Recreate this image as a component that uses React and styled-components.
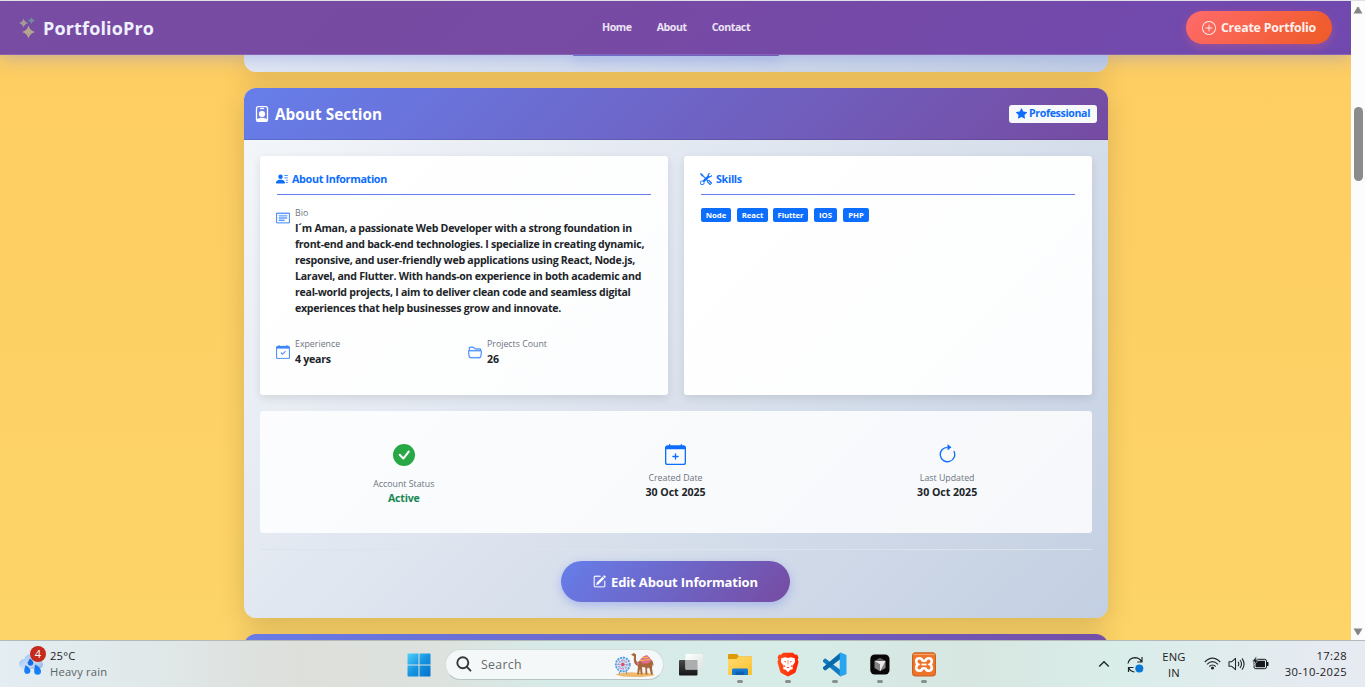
import React from "react";
import styled, { createGlobalStyle } from "styled-components";
import {
  BsPersonBadge, BsPersonLinesFill, BsCardText, BsCalendarCheck, BsFolder2Open, BsTools,
  BsCalendarPlus, BsArrowClockwise, BsPencilSquare, BsStarFill, BsCheckCircleFill, BsPlusCircle,
} from "react-icons/bs";

const Global = createGlobalStyle`
  * { box-sizing: border-box; }
  html, body { margin: 0; padding: 0; overflow: hidden; }
  body { font-family: "Open Sans", "Noto Sans", sans-serif; color: #212529; }
  svg { display: block; flex: none; }
`;

const Screen = styled.div`
  width: 1365px; height: 687px; display: flex; flex-direction: column; overflow: hidden;
  border-top: 1px solid #dfe0e8;
`;
const Browser = styled.div`display: flex; height: 639px; flex: none;`;
const Page = styled.div`
  width: 1351px; display: flex; flex-direction: column; overflow: hidden;
  background: linear-gradient(180deg, #fecd61, #fdd468);
`;

const Header = styled.header`
  position: relative; z-index: 2; height: 54px; flex: none; display: grid;
  grid-template-columns: 602px 1fr 165px; align-items: center;
  background: linear-gradient(135deg, #784ca2 0%, #774aa3 42%, #7049b0 100%);
  border-bottom: 1px solid #8863b3;
  box-shadow: 0 3px 17px rgba(102, 126, 234, 0.38);
`;
const Brand = styled.div`
  display: flex; align-items: center; gap: 6px; padding-left: 19px;
  color: #eef0ff; font-size: 18px; font-weight: 700; line-height: 26px; letter-spacing: 0.15px;
  white-space: nowrap;
`;
const Nav = styled.nav`
  display: flex; gap: 25px; font-size: 10.6px; font-weight: 700; line-height: 16px; color: #ece4f4;
  letter-spacing: -0.42px; padding-bottom: 2px;
`;
const CreateButton = styled.button`
  width: 146px; height: 33px; border: 0; border-radius: 17px; padding: 1px 0 0; display: flex;
  align-items: center; justify-content: center; gap: 5px; color: #fff0ee; font: 700 12.4px/18px "Open Sans", sans-serif;
  background: linear-gradient(135deg, #ff6b6b, #ee5a24); letter-spacing: -0.2px; white-space: nowrap;
  box-shadow: 0 3px 10px rgba(255, 107, 107, 0.3); margin-bottom: 1px;
`;

const Main = styled.main`
  width: 864px; margin-left: 244px; display: flex; flex-direction: column; gap: 16px; height: 585px;
`;
const cardShadow = "0 7px 27px rgba(0, 0, 0, 0.15)";
const PreviousCard = styled.section`
  height: 17px; flex: none; display: flex; justify-content: center; border-radius: 0 0 12px 12px;
  background: linear-gradient(135deg, #f5f7fa, #c3cfe2) bottom / 864px 530px no-repeat;
  box-shadow: ${cardShadow};
`;
const PreviousButton = styled.div`
  width: 206px; height: 1px; border-radius: 0 0 8px 8px; background: linear-gradient(90deg, #6a6ccf, #7652a9);
  box-shadow: 0 3px 11px 1px rgba(102, 126, 234, 0.45);
`;
const Card = styled.section`
  height: 530px; flex: none; border-radius: 12px; overflow: hidden; display: flex; flex-direction: column;
  background: linear-gradient(135deg, #f5f7fa, #c3cfe2); box-shadow: ${cardShadow};
`;
const NextCard = styled.section`
  height: 40px; flex: none; border-radius: 12px 12px 0 0; background: linear-gradient(90deg, #687be6, #734fa8);
  box-shadow: ${cardShadow};
`;
const CardHeader = styled.header`
  height: 52px; flex: none; padding: 0 11px 0 10px; display: flex; align-items: center; justify-content: space-between;
  background: linear-gradient(135deg, #667eea, #764ba2); border-bottom: 1px solid rgba(0, 0, 0, 0.12);
`;
const CardTitle = styled.h2`
  margin: 0; display: flex; align-items: center; gap: 5px; color: #fff; font-size: 15.3px; font-weight: 700; line-height: 20px;
  letter-spacing: 0.05px;
  svg { stroke: currentColor; stroke-width: 0.3; }
`;
const ProBadge = styled.span`
  width: 88px; height: 18px; display: flex; align-items: center; justify-content: center; gap: 2px;
  background: #f8f9fa; border-radius: 3px; color: #0d6efd; font-size: 10.6px; font-weight: 700; line-height: 16px;
  letter-spacing: -0.35px; padding-bottom: 1px;
`;
const CardBody = styled.div`flex: 1; padding: 16px; display: flex; flex-direction: column;`;
const Columns = styled.div`display: grid; grid-template-columns: 1fr 1fr; gap: 16px; height: 239px;`;
const Panel = styled.section`
  padding: 16px 17px 0; border-radius: 3px; background: linear-gradient(135deg, #ffffff, #fcfdfe);
  box-shadow: 0 3px 10px rgba(0, 0, 0, 0.1);
`;
const PanelTitle = styled.h3`
  margin: 0; height: 23px; display: flex; gap: 4px; align-items: flex-start; border-bottom: 1px solid #667eea;
  color: #0d6efd; font-size: 10.8px; font-weight: 700; line-height: 14px; letter-spacing: -0.35px;
  svg { margin: 1px 0 0 -1px; }
`;
const Fields = styled.div`display: grid; grid-template-columns: 192px 1fr; row-gap: 21px; margin-top: 11px;`;
const Field = styled.div`
  display: flex; gap: 5px; color: #3c87fb; grid-column: ${p => (p.$wide ? "1 / -1" : "auto")};
  > svg { margin: ${p => (p.$wide ? "5px" : "8px")} 0 0 -1px; stroke: currentColor; stroke-width: 0.25; }
`;
const Label = styled.div`font-size: 8.8px; line-height: 14px; color: #6c757d; white-space: nowrap;`;
const Value = styled.div`
  font-size: 10.6px; font-weight: 700; line-height: 16px; color: ${p => p.$color || "#212529"};
  letter-spacing: ${p => p.$ls || "-0.27px"}; white-space: pre;
`;
const Skills = styled.div`display: flex; gap: 6px; margin-top: 13px;`;
const Skill = styled.span`
  width: ${p => p.$w}px; height: 14px; border-radius: 2px; background: #0d6efd; color: #fff;
  font-size: 7.8px; font-weight: 700; line-height: 14px; text-align: center; letter-spacing: -0.1px;
  &:nth-child(3) { margin-left: -1px; }
`;
const Stats = styled.section`
  height: 122px; flex: none; margin-top: 16px; padding: 33px 9px 0 8px; border-radius: 3px; display: grid;
  grid-template-columns: repeat(3, 1fr);
  background: rgba(255, 255, 255, 0.84);
`;
const Stat = styled.div`
  display: flex; flex-direction: column; align-items: center; color: ${p => p.$color};
  > svg { margin-bottom: ${p => p.$gap}px; }
`;
const StatValue = styled(Value)`line-height: ${p => p.$lh || 15}px;`;
const Actions = styled.footer`
  margin-top: 16px; border-top: 1px solid #dde3eb; padding-top: 11px; display: flex; justify-content: center;
`;
const EditButton = styled.button`
  width: 229px; height: 41px; border: 0; border-radius: 21px; padding: 0; display: flex; align-items: center;
  justify-content: center; gap: 5px; color: #fff; font: 700 13px/20px "Open Sans", sans-serif; white-space: nowrap;
  background: linear-gradient(135deg, #667eea, #764ba2); box-shadow: 0 3px 10px rgba(102, 126, 234, 0.4);
  margin-right: 1px; letter-spacing: -0.14px;
  svg { stroke: currentColor; stroke-width: 0.3; }
`;

const Scrollbar = styled.div`
  width: 14px; background: #fcfcfc; display: flex; flex-direction: column; align-items: center; padding-top: 5px;
`;
const Thumb = styled.div`width: 9px; height: 74px; margin: 93px 0 447px; border-radius: 5px; background: #8b8b8b;`;

const Taskbar = styled.footer`
  height: 47px; flex: none; display: flex; border-top: 1px solid #b3b9b8; padding: 0 18px;
  background: linear-gradient(90deg, #e3edf2 0%, #e0e8e9 11%, #dddfda 22%, #dde2de 32%, #d6ebe8 41%, #d7ebe7 60%, #d7e6e1 71%, #d9ede9 82%, #e4ebf0 94%, #e6ebf1 100%);
`;
const Weather = styled.div`width: 389px; flex: none; display: flex; gap: 4px; padding-top: 4px;`;
const TaskText = styled.div`
  font-size: 11.2px; line-height: 16px; color: #1c2023; text-align: ${p => p.$align || "left"}; width: ${p => p.$w || "auto"};
  padding-top: ${p => p.$pt || "3px"}; white-space: nowrap; letter-spacing: ${p => p.$ls || "0.1px"};
  span { color: #5b6468; }
`;
const Apps = styled.div`width: 679px; flex: none; display: flex;`;
const AppSlot = styled.div`
  width: ${p => p.$w}px; margin-left: ${p => p.$ml}px; height: 46px; padding-top: ${p => p.$pt || 12}px;
  display: flex; flex-direction: column; justify-content: space-between; align-items: center;
  &::after { content: ""; width: 6px; height: 3px; margin-bottom: 4px; border-radius: 2px; background: ${p => (p.$open ? "#858f8e" : "transparent")}; }
`;
const Search = styled.div`
  width: 219px; height: 31px; margin: 8px 0 0 14px; padding: 0 7px 0 10px; border-radius: 16px; display: flex; align-items: center;
  background: #f4f8f8; border: 1px solid #d3dddb; border-bottom-color: #b8c4c2; color: #646a6c; font-size: 12.3px;
  span { flex: 1; padding: 0 0 1px 9px; letter-spacing: 0.3px; }
  > svg:first-child { margin-bottom: 1px; }
`;
const Tray = styled.div`display: flex; flex: 1;`;
const TrayIcon = styled.div`margin-left: ${p => p.$ml}px; padding-top: ${p => p.$pt}px;`;

const Sparkles = () => (
  <svg width="18" height="22" viewBox="0 0 18 22">
    <path d="M9.500 8.500 Q10.900 13.600 16 15 Q10.900 16.400 9.500 21.500 Q8.100 16.400 3 15 Q8.100 13.600 9.500 8.500Z" fill="#b5a58f" />
    <path d="M4.500 1.500 Q5.500 5 9 6 Q5.500 7 4.500 10.500 Q3.500 7 0 6 Q3.500 5 4.500 1.500Z" fill="#a39a98" />
    <path d="M12.500 .2 Q13.200 2.900 16 3.600 Q13.200 4.300 12.500 7 Q11.800 4.300 9 3.600 Q11.800 2.900 12.500 .2Z" fill="#6d8f9b" />
  </svg>
);

const WeatherIcon = () => (
  <svg width="28" height="34" viewBox="0 0 28 34">
    <defs>
      <linearGradient id="cl" x2="1" y2="1"><stop stopColor="#8ebdf2" /><stop offset=".55" stopColor="#cddff8" /><stop offset="1" stopColor="#86aee9" /></linearGradient>
      <linearGradient id="dr" x2="0" y2="1"><stop stopColor="#1466d8" /><stop offset="1" stopColor="#1786ff" /></linearGradient>
    </defs>
    <path d="M7 24C3.500 24 1 22 1 19s2.500-5 5.300-4.800C7 11 10 9 13.500 9c4 0 6.500 2.500 7 6 2.800 0 4.500 1.800 4.500 4.300S23 24 20 24z" fill="url(#cl)" />
    <path d="M12 13.500c2.600 2 3.600 3.200 3.300 5a2.900 2.900 0 0 1-5.700 0c-.2-2 1.500-3 2.400-5zM7.500 20c3.200 1.800 5 3.900 5 6.300a3.200 3.200 0 0 1-6.300.2c-.2-2.500 1-3.900 1.300-6.500zM17 19.500c4 2 6 4.200 6 6.800a3.400 3.400 0 0 1-6.800.2c-.2-2.500.8-4 .8-7z" fill="url(#dr)" />
    <circle cx="20" cy="9" r="8" fill="#c42b1c" />
    <text x="20" y="13" textAnchor="middle" fontSize="11" fill="#fff" fontFamily="Open Sans, sans-serif">4</text>
  </svg>
);

const WindowsLogo = () => (
  <svg width="24" height="24" viewBox="0 0 24 24">
    <defs><linearGradient id="win" x2="1" y2="1"><stop stopColor="#4fd0fb" /><stop offset=".5" stopColor="#1594df" /><stop offset="1" stopColor="#0673cd" /></linearGradient></defs>
    <path d="M1 .5H11.500V11.500H.500V1zM12.500.5H23l.5.500V11.500H12.500zM.500 12.500H11.500V23.500H1L.500 23zM12.500 12.500H23.500V23l-.5.500H12.500z" fill="url(#win)" />
  </svg>
);

const SearchGlass = () => (
  <svg width="16" height="16" viewBox="0 0 16 16" fill="none" stroke="#33383a" strokeWidth="1.9" strokeLinecap="round">
    <circle cx="6.800" cy="6.800" r="5.500" /><path d="M10.900 10.900L14.500 14.600" />
  </svg>
);

const CamelFair = () => (
  <svg width="42" height="26" viewBox="0 0 42 26">
    <path d="M1 22.500Q14 19 25 21q10-1 16 2-7 2-20 2-14 0-20-2.500z" fill="#eeb96c" />
    <path d="M5 22L9 13l4 9" stroke="#6e8fc9" fill="none" />
    <circle cx="8.800" cy="12.500" r="7" fill="#d7e7f8" stroke="#559de5" strokeWidth="1.800" strokeDasharray="2 1" />
    <circle cx="8.800" cy="12.500" r="4.200" fill="none" stroke="#e58299" strokeWidth="1.300" strokeDasharray="1.500 1" />
    <path d="M2 12.500h14M8.800 5.500v14M4 7.500l10 10M14 7.500l-10 10" stroke="#6ba5df" strokeWidth=".6" />
    <circle cx="8.800" cy="12.500" r="1.700" fill="#e4496a" />
    <path d="M17 2.500l3-1.500 2 1.500v5.500c.5 2 1.500 2.500 3 1.500l3.500-4 4-1 4.500 3c2 1.500 2.500 4 2.500 6.500l-1-1.500-.5 4 1 6h-2l-1.500-6-1.500-1-1 1.500.5 5.500h-2l-.2-7-3.300-.5.5 7.500h-1.800l-.7-6-1 6h-1.800l.8-8.500c-3-1-4-3-4.200-6L20 4.500z" fill="#a8673a" />
    <path d="M25.500 8.500l3.500-4 4-1.500 3 3 1.500 3-4 2.500h-5z" fill="#e06d8f" />
    <path d="M26 8.500l10-1M28 5.500h6" stroke="#f7c04c" strokeWidth="1" />
    <path d="M23 10.500l1.500 2" stroke="#de70b1" strokeWidth="2" />
  </svg>
);

const TaskView = () => (
  <svg width="24" height="24" viewBox="0 0 24 24">
    <defs>
      <linearGradient id="tv" x2="0" y2="1"><stop stopColor="#4a4a4a" /><stop offset="1" stopColor="#161616" /></linearGradient>
      <linearGradient id="tw" x2="1" y2="1"><stop stopColor="#fff" /><stop offset="1" stopColor="#dfe2e2" /></linearGradient>
    </defs>
    <rect y="7" width="18.500" height="15.500" rx="1" fill="url(#tv)" />
    <rect x="6.500" y="1" width="17.500" height="15.500" rx="1" fill="url(#tw)" />
    <rect x="6.500" y="7" width="12" height="9.500" fill="#aaaeae" />
  </svg>
);

const Explorer = () => (
  <svg width="24" height="24" viewBox="0 0 24 24">
    <defs><linearGradient id="fo" x2="1" y2="1"><stop stopColor="#ffda70" /><stop offset="1" stopColor="#fbc22f" /></linearGradient></defs>
    <path d="M0 2q0-1 1-1h8l2 2.500h12q1 0 1 1V9H0z" fill="#dd9b05" />
    <path d="M0 6h8.500l2-2.500H23.500q.5 0 .5.700V22H0z" fill="url(#fo)" />
    <path d="M4 22v-5q0-1.500 1.500-1.500h13q1.500 0 1.500 1.500v5z" fill="#147bd1" /><path d="M7.500 18.500h9V22h-9z" fill="#0b61ae" />
  </svg>
);

const Brave = () => (
  <svg width="22" height="25" viewBox="0 0 22 25">
    <defs><linearGradient id="br" x2="1"><stop stopColor="#ff4e1c" /><stop offset="1" stopColor="#ff2000" /></linearGradient></defs>
    <path d="M6 .8h10l2 2 2-.3 1.500 3-.8 2 .8 2.500-2.500 9q-.5 1.500-2 2.500L11 24.500 5 21.500q-1.500-1-2-2.500L.5 10l.8-2.500-.8-2 1.500-3 2 .3z" fill="url(#br)" />
    <path d="M4.200 6.300l4-1L11 6l2.800-.7 4 1 .3 3.700-2.700 4 .4 3.300-2.500.5L11 20.200l-2.300-2.400-2.500-.5.400-3.300-2.700-4z" fill="#fff" />
    <path d="M6.500 9l2.800.4-.5 1.200zM15.500 9l-2.800.4.500 1.200zM9.300 15L11 16.300l1.700-1.300zM6.200 12.800l2.100 1.200-.8 1.300zM15.800 12.800l-2.100 1.200.8 1.300zM10.700 8h.6v4.500h-.6z" fill="#ff3a0d" />
  </svg>
);

const VsCode = () => (
  <svg width="25" height="25" viewBox="0 0 25 25">
    <path d="M1 8.200l1.800-1.600 1 .1L18.500 18v6.500L1 9.800z" fill="#1079bf" />
    <path d="M1 16.800l1.800 1.600 1-.1L18.500 7V.5L1 15.200z" fill="#0768ab" />
    <path d="M18.500.5l5.500 2.200q.5.300.5.900v17.800q0 .600-.5.900l-5.500 2.200-.8-.5V1z" fill="#29a5ef" />
  </svg>
);

const CursorApp = () => (
  <svg width="20" height="21" viewBox="0 0 20 21">
    <rect x=".3" y=".500" width="19.200" height="20" rx="4.500" fill="#080808" />
    <path d="M10 4l5.500 3v7L10 17.200 4.500 14V7z" fill="#858585" />
    <path d="M10 4l5.500 3L10 10.500 4.500 7z" fill="#5c5c5c" />
    <path d="M4.500 7h11L10 17.200v-7z" fill="#e8e8e8" />
  </svg>
);

const Xampp = () => (
  <svg width="24" height="25" viewBox="0 0 24 25">
    <rect x=".5" y=".8" width="23" height="23.200" rx="2.500" fill="#ee7428" stroke="#c76022" />
    <path d="M1.500 2.500h21" stroke="#f6a56e" />
    <path d="M7.300 6.300Q9.600 6.300 10.300 8.300Q12 9.300 13.700 8.300Q14.400 6.300 16.700 6.300Q19.800 6.300 19.800 9.300Q19.800 11.300 18 12.400Q19.800 13.500 19.800 15.700Q19.800 18.700 16.700 18.700Q14.400 18.700 13.700 16.700Q12 15.700 10.300 16.700Q9.600 18.700 7.300 18.700Q4.200 18.700 4.200 15.700Q4.200 13.500 6 12.400Q4.200 11.300 4.200 9.300Q4.200 6.300 7.300 6.300Z" fill="none" stroke="#fff" strokeWidth="2.600" />
    <path d="M9.500 12.500h5" stroke="#fff" strokeWidth="1.800" />
  </svg>
);

const Chevron = () => (
  <svg width="12" height="8" viewBox="0 0 12 8" fill="none" stroke="#20262a" strokeWidth="1.400"><path d="M1.200 6.500L6 1.700l4.800 4.800" /></svg>
);
const Sync = () => (
  <svg width="17" height="17" viewBox="0 0 17 17" fill="none" stroke="#20262a" strokeWidth="1.200">
    <path d="M1 7.500Q2 2 8 1.600q4.500 0 6.700 4.300M15 1v5h-4.700M1.500 16v-4.500H6.500M1.800 12Q3.500 15.500 7.500 16" />
    <circle cx="12.300" cy="12.500" r="4" fill="#0878d4" stroke="none" />
  </svg>
);
const Wifi = () => (
  <svg width="17" height="13" viewBox="0 0 17 13" fill="none" stroke="#23292c" strokeWidth="1.150">
    <path d="M.8 5Q8.500-2.800 16.200 5M3 7.300q5.500-5.300 11 0M5.300 9.500q3.200-3 6.400 0" /><circle cx="8.500" cy="11" r="1.600" fill="#23292c" stroke="none" />
  </svg>
);
const Volume = () => (
  <svg width="17" height="14" viewBox="0 0 17 14" fill="none" stroke="#23292c" strokeWidth="1.100" strokeLinejoin="round">
    <path d="M1 4.800h2.500L7.500 1.300v11.400L3.500 9.200H1zM10 4.800q1.600 2.200 0 4.400M12 3q3 4 0 8M14 1.300q4.200 5.700 0 11.400" />
  </svg>
);
const Battery = () => (
  <svg width="17" height="14" viewBox="0 0 17 14">
    <rect x="2" y="3.300" width="12.500" height="9.400" rx="1.800" fill="none" stroke="#16191b" />
    <rect x="3.500" y="4.800" width="9.500" height="6.400" rx=".6" fill="#16191b" /><path d="M15 6h1.500v4H15z" fill="#16191b" />
    <path d="M4.500 0L0 5.800h2.700L1.500 9.500 6.500 4H4z" fill="#16191b" stroke="#e0ebec" strokeWidth=".6" />
  </svg>
);
const Arrow = ({ down }) => (
  <svg width="10" height="8" viewBox="0 0 10 8"><path d={down ? "M.5 .5h9L5.700 6.700q-.7.700-1.400 0z" : "M.5 7.500h9L5.700 1.200q-.7-.700-1.400 0z"} fill="#858585" /></svg>
);

const bio = `I´m Aman, a passionate Web Developer with a strong foundation in
front-end and back-end technologies. I specialize in creating dynamic,
responsive, and user-friendly web applications using React, Node.js,
Laravel, and Flutter. With hands-on experience in both academic and
real-world projects, I aim to deliver clean code and seamless digital
experiences that help businesses grow and innovate.`;

const skills = [["Node", 30], ["React", 31], ["Flutter", 35], ["IOS", 23], ["PHP", 26]];

export default function App() {
  return (
    <Screen>
      <Global />
      <Browser>
        <Page>
          <Header>
            <Brand><Sparkles />PortfolioPro</Brand>
            <Nav><span>Home</span><span>About</span><span>Contact</span></Nav>
            <CreateButton><BsPlusCircle size={14} />Create Portfolio</CreateButton>
          </Header>
          <Main>
            <PreviousCard><PreviousButton /></PreviousCard>
            <Card>
              <CardHeader>
                <CardTitle><BsPersonBadge size={16} />About Section</CardTitle>
                <ProBadge><BsStarFill size={11} />Professional</ProBadge>
              </CardHeader>
              <CardBody>
                <Columns>
                  <Panel>
                    <PanelTitle><BsPersonLinesFill size={12} />About Information</PanelTitle>
                    <Fields>
                      <Field $wide>
                        <BsCardText size={14} />
                        <div><Label>Bio</Label><Value>{bio}</Value></div>
                      </Field>
                      <Field>
                        <BsCalendarCheck size={14} />
                        <div><Label>Experience</Label><Value>4 years</Value></div>
                      </Field>
                      <Field>
                        <BsFolder2Open size={14} />
                        <div><Label>Projects Count</Label><Value $ls="0">26</Value></div>
                      </Field>
                    </Fields>
                  </Panel>
                  <Panel>
                    <PanelTitle><BsTools size={12} />Skills</PanelTitle>
                    <Skills>{skills.map(([name, w]) => <Skill key={name} $w={w}>{name}</Skill>)}</Skills>
                  </Panel>
                </Columns>
                <Stats>
                  <Stat $color="#28a745" $gap={11}>
                    <BsCheckCircleFill size={22} style={undefined} /><Label>Account Status</Label><StatValue $lh={14} $ls="-0.2px" $color="#198754">Active</StatValue>
                  </Stat>
                  <Stat $color="#0d6efd" $gap={6}>
                    <BsCalendarPlus size={21} /><Label>Created Date</Label><StatValue $ls="-0.02px">30 Oct 2025</StatValue>
                  </Stat>
                  <Stat $color="#0d6efd" $gap={6}>
                    <BsArrowClockwise size={21} /><Label>Last Updated</Label><StatValue $ls="-0.02px">30 Oct 2025</StatValue>
                  </Stat>
                </Stats>
                <Actions><EditButton><BsPencilSquare size={13} />Edit About Information</EditButton></Actions>
              </CardBody>
            </Card>
            <NextCard />
          </Main>
        </Page>
        <Scrollbar><Arrow /><Thumb /><Arrow down /></Scrollbar>
      </Browser>
      <Taskbar>
        <Weather><WeatherIcon /><TaskText $ls="0.2px">25°C<br /><span>Heavy rain</span></TaskText></Weather>
        <Apps>
          <AppSlot $w={24} $ml={0}><WindowsLogo /></AppSlot>
          <Search><SearchGlass /><span>Search</span><CamelFair /></Search>
          <AppSlot $w={24} $ml={15}><TaskView /></AppSlot>
          <AppSlot $w={24} $ml={25} $open><Explorer /></AppSlot>
          <AppSlot $w={22} $ml={25} $pt={11} $open><Brave /></AppSlot>
          <AppSlot $w={25} $ml={23} $pt={11} $open><VsCode /></AppSlot>
          <AppSlot $w={20} $ml={23} $pt={13} $open><CursorApp /></AppSlot>
          <AppSlot $w={24} $ml={22} $pt={11} $open><Xampp /></AppSlot>
        </Apps>
        <Tray>
          <TrayIcon $ml={12} $pt={19}><Chevron /></TrayIcon>
          <TrayIcon $ml={17} $pt={15}><Sync /></TrayIcon>
          <TrayIcon $ml={15} $pt={8}><TaskText $w="30px" $align="center" $pt="0" $ls="0.2px">ENG<br />IN</TaskText></TrayIcon>
          <TrayIcon $ml={15} $pt={16}><Wifi /></TrayIcon>
          <TrayIcon $ml={7} $pt={16}><Volume /></TrayIcon>
          <TrayIcon $ml={7} $pt={15}><Battery /></TrayIcon>
          <TrayIcon $ml={8} $pt={7}><TaskText $w="70px" $align="right" $pt="0" $ls="0.4px">17:28<br />30-10-2025</TaskText></TrayIcon>
        </Tray>
      </Taskbar>
    </Screen>
  );
}
